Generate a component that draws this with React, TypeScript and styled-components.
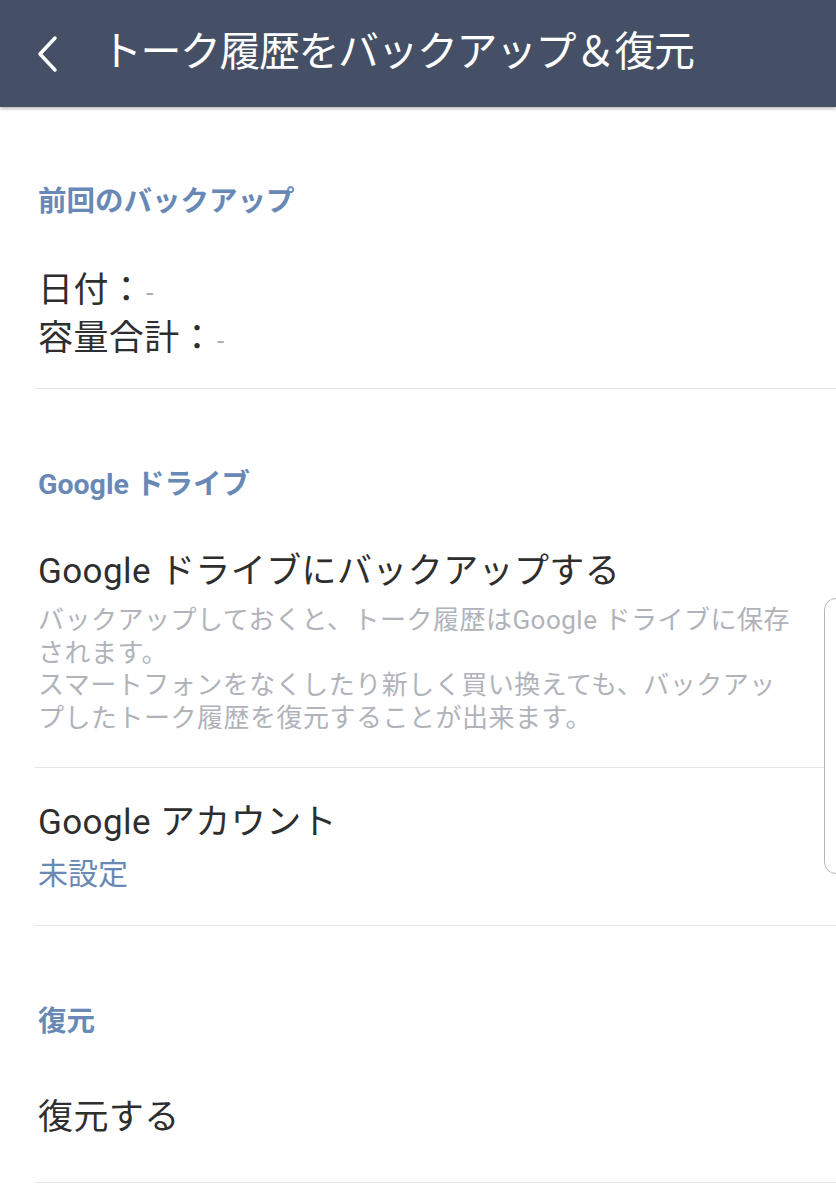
import React from "react";
import styled, { createGlobalStyle } from "styled-components";

const Global = createGlobalStyle`
  html, body { margin: 0; padding: 0; background: #ffffff; }
  body { font-family: Roboto, "Noto Sans CJK JP", sans-serif; }
`;

const Page = styled.div`
  width: 836px;
  min-height: 1200px;
  background: #fff;
  position: relative;
  overflow: hidden;
`;

const Header = styled.header`
  height: 107px;
  background: #454f66;
  display: flex;
  align-items: center;
  padding-left: 33px;
  box-shadow: 0 2px 3px rgba(0, 0, 0, 0.25);
  position: relative;
  z-index: 1;
`;

const BackButton = styled.div`
  width: 30px;
  height: 40px;
  display: flex;
  align-items: center;
  justify-content: center;
  margin-right: 38px;
`;

const Title = styled.h1`
  margin: 0;
  font-family: Roboto, "Noto Sans CJK JP", sans-serif;
  font-weight: 400;
  font-size: 41px;
  line-height: 48px;
  color: #ffffff;
  letter-spacing: -1.5px;
  margin-top: -4px;
`;

const Section = styled.section<{ $top: number }>`
  padding-top: ${(p) => p.$top}px;
`;

const SectionTitle = styled.h2`
  margin: 0 0 0 38px;
  font-family: Roboto, "Noto Sans CJK JP", sans-serif;
  font-weight: 700;
  font-size: 28.5px;
  line-height: 40px;
  color: #6889b6;
  letter-spacing: 0;
`;

const Row = styled.div<{ $top: number; $bottom: number }>`
  margin-left: 35px;
  padding: ${(p) => p.$top}px 38px ${(p) => p.$bottom}px 3px;
  border-bottom: 1.5px solid #e6e6e8;
`;

const MainText = styled.div`
  font-family: Roboto, "Noto Sans CJK JP", sans-serif;
  font-size: 35px;
  line-height: 45px;
  letter-spacing: 0.4px;
  color: #2e2e2e;
`;

const Dash = styled.span`
  color: #a9acb3;
  font-size: 26px;
  margin-left: 2px;
`;

const Desc = styled.p`
  margin: 10px 0 0;
  font-family: Roboto, "Noto Sans CJK JP", sans-serif;
  font-size: 26px;
  line-height: 32.5px;
  color: #b0b3ba;
  letter-spacing: 0.5px;
  width: 760px;
`;

const Value = styled.div`
  margin-top: 6px;
  font-family: Roboto, "Noto Sans CJK JP", sans-serif;
  font-size: 30px;
  line-height: 45px;
  color: #6889b6;
`;

const EdgeHandle = styled.div`
  position: absolute;
  right: -12px;
  top: 598px;
  width: 22px;
  height: 274px;
  border: 1.5px solid #b5b5b5;
  border-radius: 12px;
  background: #fff;
`;

export default function App() {
  return (
    <Page>
      <Global />
      <Header>
        <BackButton>
          <svg width="26" height="38" viewBox="0 0 26 38">
            <path d="M20 3 L5 19 L20 35" fill="none" stroke="#fff" strokeWidth="3.5" strokeLinecap="round" strokeLinejoin="round" />
          </svg>
        </BackButton>
        <Title>トーク履歴をバックアップ＆復元</Title>
      </Header>

      <Section $top={75}>
        <SectionTitle>前回のバックアップ</SectionTitle>
        <Row $top={46} $bottom={24}>
          <MainText>
            日付：<Dash>-</Dash>
          </MainText>
          <MainText>
            容量合計：<Dash>-</Dash>
          </MainText>
        </Row>
      </Section>

      <Section $top={76}>
        <SectionTitle>Google ドライブ</SectionTitle>
        <Row $top={44} $bottom={33}>
          <MainText>Google ドライブにバックアップする</MainText>
          <Desc>
            バックアップしておくと、トーク履歴はGoogle ドライブに保存されます。
            <br />
            スマートフォンをなくしたり新しく買い換えても、バックアップしたトーク履歴を復元することが出来ます。
          </Desc>
        </Row>
        <Row $top={32} $bottom={29}>
          <MainText>Google アカウント</MainText>
          <Value>未設定</Value>
        </Row>
      </Section>

      <Section $top={76}>
        <SectionTitle>復元</SectionTitle>
        <Row $top={53} $bottom={42}>
          <MainText>復元する</MainText>
        </Row>
      </Section>

      <EdgeHandle />
    </Page>
  );
}
